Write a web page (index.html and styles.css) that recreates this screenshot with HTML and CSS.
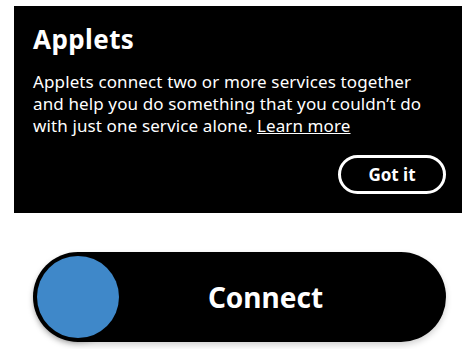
FILE: index.html
```html
<!DOCTYPE html>
<html>
<head>
<meta charset="utf-8">
<link rel="stylesheet" href="styles.css">
</head>
<body>
<section class="card">
  <h1 class="card-title">Applets</h1>
  <p class="card-text">Applets connect two or more services together and help you do something that you couldn’t do with just one service alone. <a class="card-link" href="#">Learn more</a></p>
  <div class="card-actions">
    <button class="btn-outline">Got it</button>
  </div>
</section>
<div class="toggle">
  <span class="knob"></span>
  <span class="toggle-label">Connect</span>
</div>
</body>
</html>
```
FILE: styles.css
```css
html, body {
  margin: 0;
  padding: 0;
  background: #fff;
}
body {
  font-family: "Noto Sans", sans-serif;
  width: 467px;
  height: 349px;
  overflow: hidden;
}
.card {
  box-sizing: border-box;
  margin: 6px 0 0 14px;
  width: 448px;
  height: 207px;
  background: #000;
  color: #fff;
  padding: 18px 16px 0 19px;
}
.card-title {
  margin: 0;
  font-size: 26px;
  line-height: 30px;
  font-weight: 700;
  letter-spacing: 0.4px;
}
.card-text {
  margin: 17px 0 0;
  max-width: 400px;
  font-size: 17px;
  line-height: 22px;
  letter-spacing: 0.12px;
}
.card-link {
  display: inline-block;
  line-height: 22px;
  color: #fff;
  text-decoration: underline;
}
.card-actions {
  display: flex;
  justify-content: flex-end;
  margin-top: 18px;
}
.btn-outline {
  box-sizing: border-box;
  width: 108px;
  height: 39px;
  border: 3px solid #fff;
  border-radius: 20px;
  background: #000;
  color: #fff;
  font-family: inherit;
  font-size: 17px;
  font-weight: 700;
  padding: 0;
}
.toggle {
  box-sizing: border-box;
  display: flex;
  align-items: center;
  margin: 39px 0 0 33px;
  width: 413px;
  height: 90px;
  border-radius: 45px;
  background: #000;
  padding-left: 4px;
  box-shadow: 0 3px 6px rgba(0,0,0,0.18);
}
.knob {
  flex: none;
  width: 82px;
  height: 82px;
  border-radius: 50%;
  background: #3f88c9;
  box-shadow: -1px 3px 6px rgba(0,0,0,0.45);
}
.toggle-label {
  flex: 1;
  text-align: center;
  padding-right: 34px;
  color: #fff;
  font-size: 28px;
  font-weight: 700;
}
```
